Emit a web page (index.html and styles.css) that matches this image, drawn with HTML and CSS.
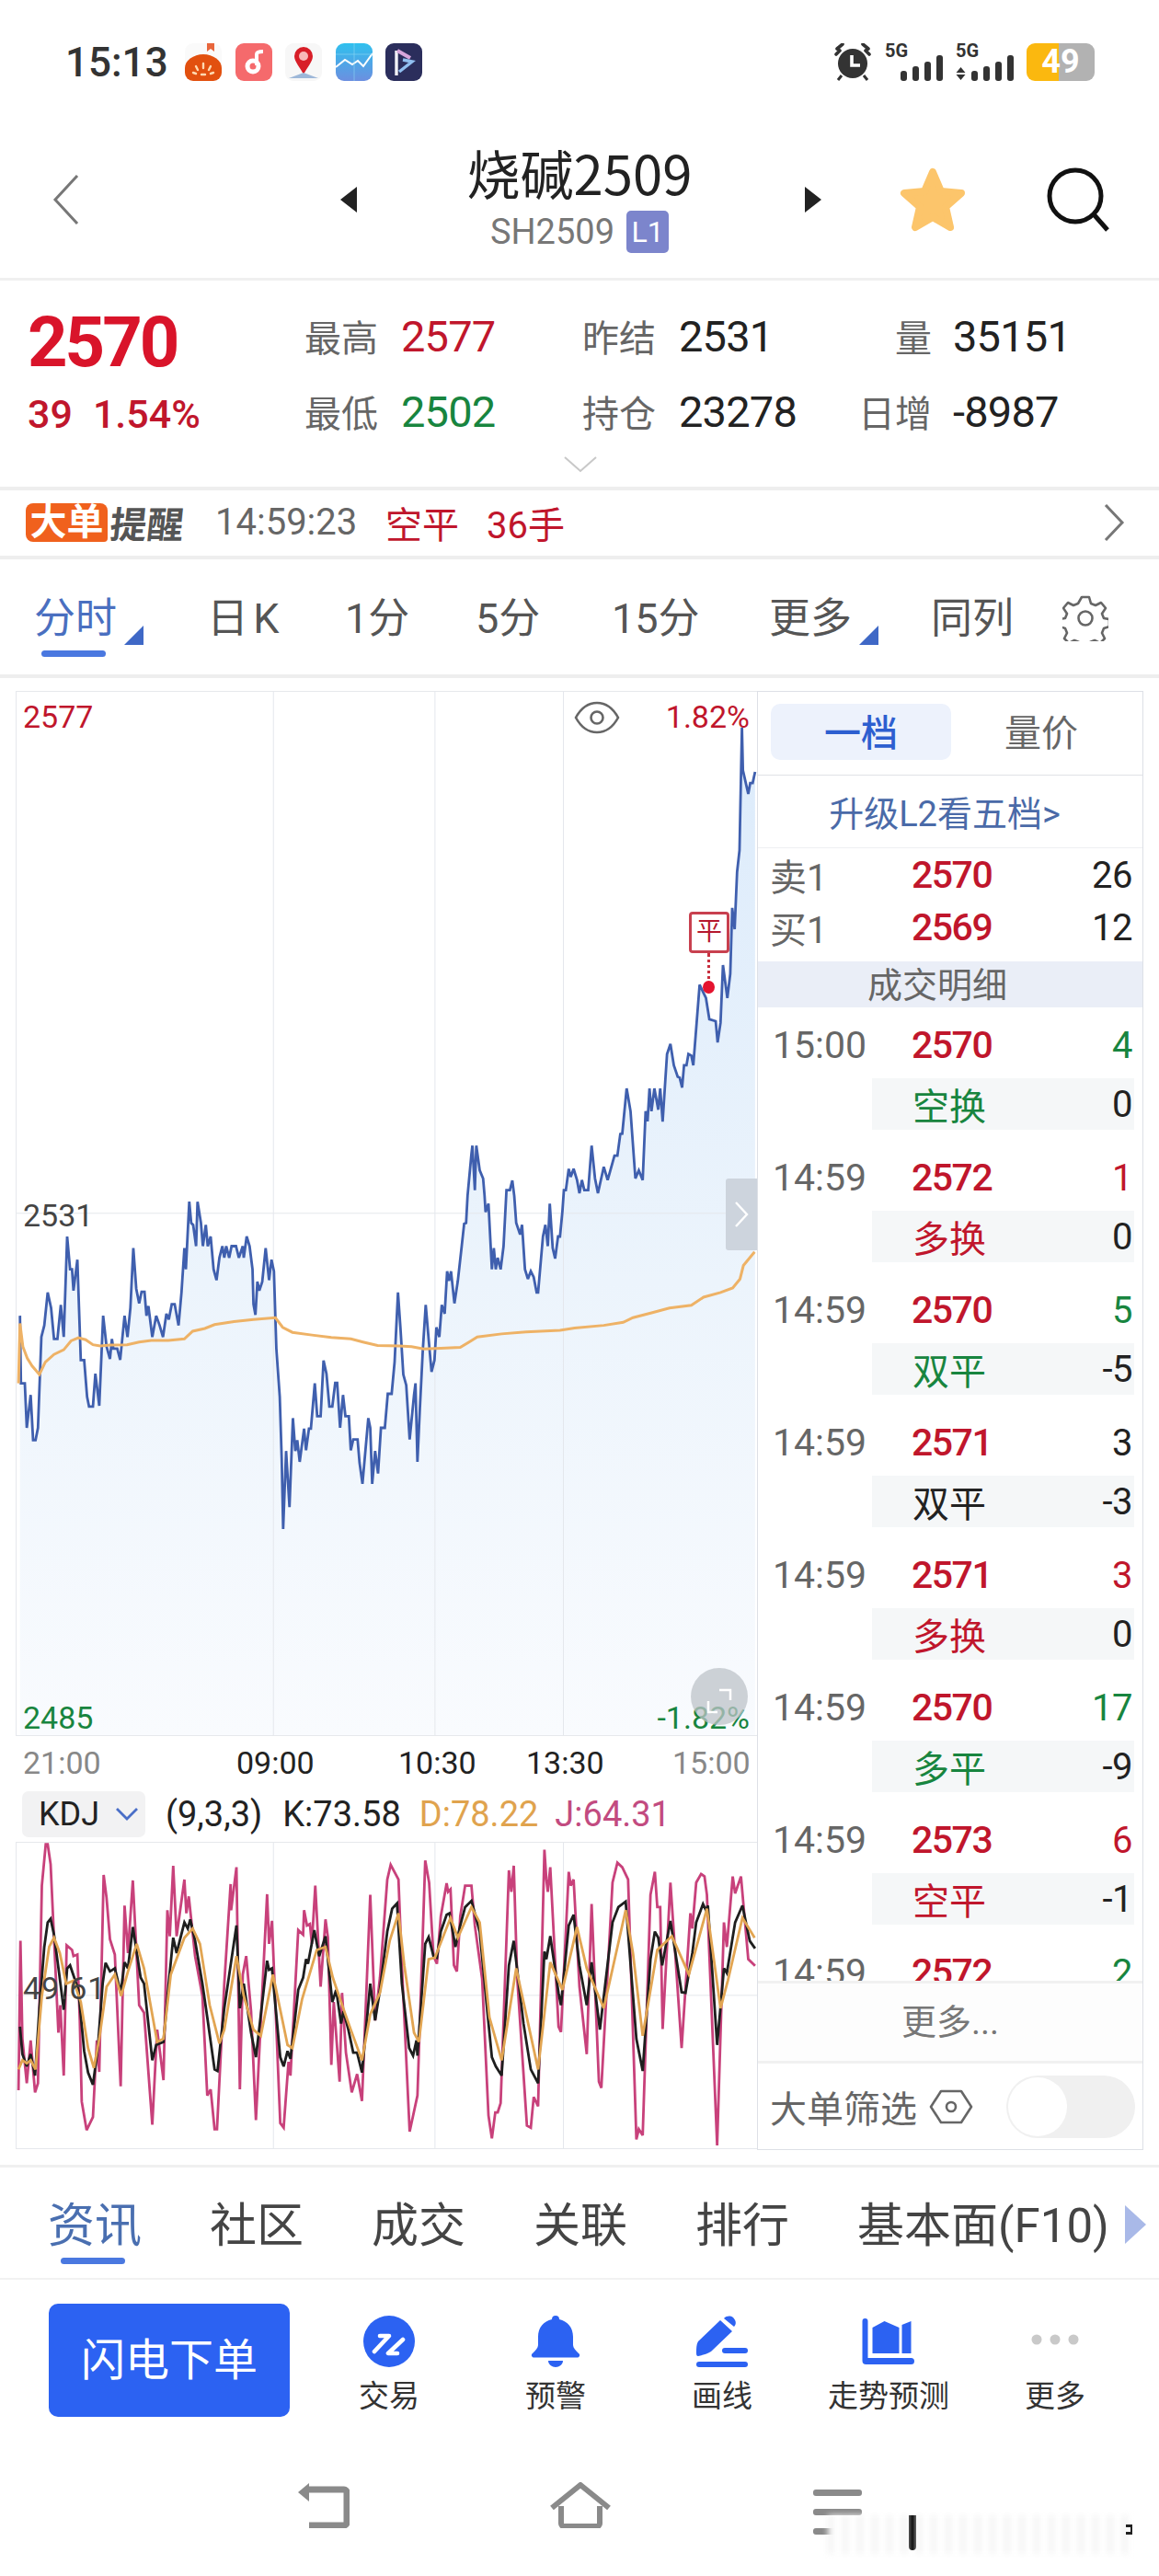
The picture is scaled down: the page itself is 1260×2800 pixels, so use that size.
FILE: index.html
```html
<!DOCTYPE html>
<html lang="zh">
<head>
    <meta charset="utf-8">
    <title>烧碱2509</title>
    <link rel="stylesheet" href="styles.css">
</head>
<body>
    <!-- status bar -->
    <div class="status">
        <span class="clock">15:13</span>
        <div class="app-icons">
            <svg class="app" viewBox="0 0 40 41"><rect width="40" height="41" rx="9" fill="#fafafa"/><path d="M24 0h8v9l-4-3-4 3z" fill="#e8663c"/><path d="M0 27a20 15 0 0 1 40 0v5a9 9 0 0 1-9 9H9a9 9 0 0 1-9-9z" fill="#e2500f"/><path d="M20 22v5M12 25l2 4M28 25l-2 4M9 32l3 1M31 32l-3 1M18 34h4" stroke="#ffd9b0" stroke-width="2.4" stroke-linecap="round"/></svg>
            <svg class="app" viewBox="0 0 40 41"><rect width="40" height="41" rx="9" fill="#f56a6c"/><circle cx="19" cy="25" r="6" fill="none" stroke="#fff" stroke-width="5"/><path d="M23 24V12c0-2 3-3 7-3" fill="none" stroke="#fff" stroke-width="4"/></svg>
            <svg class="app" viewBox="0 0 40 41"><rect width="40" height="41" rx="9" fill="#f7f7f7"/><path d="M20 4a10 10 0 0 1 10 10c0 6-6 12-10 20-4-8-10-14-10-20A10 10 0 0 1 20 4z" fill="#d81e28"/><path d="M4 38l16-6 16 6z" fill="#9db7d8"/><circle cx="20" cy="14" r="5" fill="#f8b8b8"/></svg>
            <svg class="app" viewBox="0 0 40 41"><defs><linearGradient id="stockBg" x1="0" y1="0" x2="0" y2="1"><stop offset="0" stop-color="#2fc0ee"/><stop offset="1" stop-color="#6c8fe0"/></linearGradient></defs><rect width="40" height="41" rx="9" fill="url(#stockBg)"/><path d="M0 26l10-8 8 5 6-4 6 6 10-14" fill="none" stroke="#fff" stroke-width="2"/><path d="M0 12h40M20 0v41" stroke="#8fd8f4" stroke-width=".6"/></svg>
            <svg class="app" viewBox="0 0 40 41"><rect width="40" height="41" rx="9" fill="#2b2e5c"/><path d="M12 8v27" stroke="#f3f3f8" stroke-width="3.4"/><path d="M13 8l14 8" stroke="#d8a6dc" stroke-width="4"/><path d="M15 31l14-11-10-2" fill="none" stroke="#90bff0" stroke-width="3.4"/></svg>
        </div>
        <div class="status-right">
            <svg class="alarm" viewBox="0 0 40 41"><circle cx="20" cy="22" r="16" fill="#333"/><path d="M6 8l-4 4 M34 8l4 4 M3 6l6-5 M37 6l-6-5" stroke="#333" stroke-width="3.6" stroke-linecap="round"/><path d="M8 35l-4 5 M32 35l4 5" stroke="#333" stroke-width="3"/><path d="M19 13v11h9" fill="none" stroke="#fff" stroke-width="3.6"/></svg>
            <div class="signal">
                <span class="net">5G</span>
                <span class="bars"><i class="b1"></i><i class="b2"></i><i class="b3"></i><i class="b4"></i></span>
            </div>
            <div class="signal second">
                <span class="net">5G</span>
                <svg class="updown" viewBox="0 0 11 14"><path d="M5.5 0L10.500 6H.5zM5.500 14L.5 8h10z" fill="#333"/></svg>
                <span class="bars"><i class="b1"></i><i class="b2"></i><i class="b3"></i><i class="b4"></i></span>
            </div>
            <div class="battery"><span>49</span></div>
        </div>
    </div>

    <!-- title bar -->
    <div class="nav">
        <svg class="back" viewBox="0 0 30 54"><path d="M27 1L3 27l24 26" fill="none" stroke="#777" stroke-width="3"/></svg>
        <svg class="tri tri-l" viewBox="0 0 18 28"><path d="M18 0v28L0 14z" fill="#222"/></svg>
        <div class="nav-title">
            <div class="name">烧碱2509</div>
            <div class="code">SH2509<span class="lv">L1</span></div>
        </div>
        <svg class="tri tri-r" viewBox="0 0 18 28"><path d="M0 0v28l18-14z" fill="#222"/></svg>
        <svg class="star" viewBox="0 0 72 72"><path d="M36 6l9 21 22 2-17 15 5 22-19-11-19 11 5-22L5 29l22-2z" fill="#fcc56b" stroke="#fcc56b" stroke-width="8" stroke-linejoin="round"/></svg>
        <svg class="search" viewBox="0 0 72 72"><circle cx="32" cy="32" r="28" fill="none" stroke="#111" stroke-width="5"/><path d="M52 52l15 17" stroke="#111" stroke-width="5"/></svg>
    </div>

    <!-- quote -->
    <div class="quote">
        <div class="price-box">
            <div class="last">2570</div>
            <div class="change"><span>39</span><span>1.54%</span></div>
        </div>
        <div class="stats">
            <div class="stat"><span class="lbl">最高</span><span class="val up">2577</span></div>
            <div class="stat"><span class="lbl">昨结</span><span class="val">2531</span></div>
            <div class="stat"><span class="lbl">量</span><span class="val">35151</span></div>
            <div class="stat"><span class="lbl">最低</span><span class="val down">2502</span></div>
            <div class="stat"><span class="lbl">持仓</span><span class="val">23278</span></div>
            <div class="stat"><span class="lbl">日增</span><span class="val">-8987</span></div>
        </div>
        <svg class="expand" viewBox="0 0 36 18"><path d="M1 1l17 15L35 1" fill="none" stroke="#c8c8c8" stroke-width="2"/></svg>
    </div>

    <!-- big order alert -->
    <div class="alert">
        <span class="alert-tag">大单</span><span class="alert-word">提醒</span>
        <span class="alert-time">14:59:23</span>
        <span class="alert-type">空平</span>
        <span class="alert-num">36手</span>
        <svg class="alert-more" viewBox="0 0 24 40"><path d="M3 1l18 19L3 39" fill="none" stroke="#777" stroke-width="3"/></svg>
    </div>

    <!-- period tabs -->
    <div class="periods">
        <span class="period on">分时<i class="corner"></i></span>
        <span class="period p-day">日 K</span>
        <span class="period p-1">1分</span>
        <span class="period p-5">5分</span>
        <span class="period p-15">15分</span>
        <span class="period p-more">更多<i class="corner"></i></span>
        <span class="period p-same">同列</span>
        <svg class="gear" viewBox="0 0 50 50"><path d="M21 2h8l2 7 5 2 6-3 5 6-4 6 2 5 6 1v8l-6 2-2 5 3 6-5 5-6-3-5 2-2 6h-8l-2-6-5-2-6 3-5-5 3-6-2-5-6-2v-8l6-1 2-5-4-6 5-6 6 3 5-2z" fill="none" stroke="#666" stroke-width="2.600" stroke-linejoin="round"/><circle cx="25" cy="25" r="7.500" fill="none" stroke="#666" stroke-width="2.600"/></svg>
    </div>

    <!-- charts and trades -->
    <div class="board">
        <div class="charts">
            <div class="main-chart">
                <svg class="plot" viewBox="33 -1304 1522 2699" preserveAspectRatio="none">
                    <defs>
                        <linearGradient id="areaFill" x1="0" y1="0" x2="0" y2="1">
                            <stop offset="0" stop-color="#dcebfb"/>
                            <stop offset=".55" stop-color="#ecf4fc"/>
                            <stop offset="1" stop-color="#f9fbfe"/>
                        </linearGradient>
                    </defs>
                    <polygon fill="url(#areaFill)" points="40,1395 40,310 42,485 50,485 54,600 62,515 67,632 72,632 77,600 84,365 90,335 97,250 104,290 110,370 117,370 124,282 130,365 137,105 143,190 147,190 150,245 158,165 165,425 172,425 178,520 182,545 190,545 195,460 203,543 211,310 218,390 225,422 229,370 232,395 240,395 246,424 255,310 261,365 267,290 273,135 279,240 285,278 290,248 296,248 300,310 304,285 312,365 320,310 327,335 334,365 341,305 346,320 352,280 358,280 366,335 372,250 378,135 381,190 388,15 392,70 396,75 402,130 405,15 412,70 416,130 422,75 426,130 432,105 438,190 444,218 450,160 456,130 460,160 464,130 470,160 475,130 484,130 490,160 498,130 500,160 506,105 512,130 518,190 520,280 524,308 528,222 532,245 538,222 545,135 552,218 557,165 562,195 567,395 574,520 578,680 581,862 587,660 594,805 601,575 606,660 610,632 615,688 624,602 628,658 634,602 638,602 646,485 651,570 658,570 664,426 670,460 676,545 682,545 688,484 692,484 698,600 704,515 709,570 716,570 720,658 725,630 734,630 738,690 744,745 750,660 756,575 760,600 764,745 770,660 776,718 782,600 790,600 796,512 804,512 810,430 817,250 822,340 828,462 834,490 841,630 850,515 853,485 857,688 862,550 868,400 874,282 880,370 886,455 892,425 896,340 902,365 907,282 913,305 918,195 922,220 926,195 933,278 940,220 948,130 953,72 957,70 960,0 968,-109 970,-130 975,-15 978,-130 985,-66 992,-45 995,0 997,42 1003,20 1010,190 1014,135 1018,190 1022,160 1028,190 1034,130 1040,-15 1047,-15 1052,-40 1056,0 1060,70 1068,100 1072,75 1078,190 1084,215 1090,195 1096,210 1102,250 1105,250 1115,105 1120,75 1125,130 1129,20 1135,135 1140,162 1146,105 1150,105 1155,40 1158,-15 1162,-15 1168,-70 1172,-49 1178,-70 1185,-41 1190,-7 1195,-41 1200,-15 1208,-15 1215,-130 1222,-45 1228,-7 1240,-75 1248,-41 1262,-104 1268,-104 1274,-160 1278,-161 1287,-278 1295,-219 1305,-45 1312,-66 1320,-41 1326,-219 1330,-193 1334,-278 1338,-219 1344,-278 1352,-223 1356,-278 1361,-192 1370,-367 1377,-393 1384,-338 1392,-308 1396,-306 1401,-280 1405,-338 1410,-338 1414,-367 1420,-363 1424,-338 1437,-546 1450,-512 1457,-457 1470,-452 1474,-397 1480,-448 1485,-597 1494,-512 1500,-575 1504,-745 1509,-690 1514,-838 1519,-894 1524,-1212 1526,-1101 1537,-1040 1541,-1068 1546,-1068 1551,-1097 1551,1395"/>
                    <g class="grid">
                        <line x1="561" y1="-1304" x2="561" y2="1395"/>
                        <line x1="893" y1="-1304" x2="893" y2="1395"/>
                        <line x1="1157" y1="-1304" x2="1157" y2="1395"/>
                        <line x1="33" y1="45" x2="1555" y2="45"/>
                    </g>
                    <polyline class="price-line" points="40,310 42,485 50,485 54,600 62,515 67,632 72,632 77,600 84,365 90,335 97,250 104,290 110,370 117,370 124,282 130,365 137,105 143,190 147,190 150,245 158,165 165,425 172,425 178,520 182,545 190,545 195,460 203,543 211,310 218,390 225,422 229,370 232,395 240,395 246,424 255,310 261,365 267,290 273,135 279,240 285,278 290,248 296,248 300,310 304,285 312,365 320,310 327,335 334,365 341,305 346,320 352,280 358,280 366,335 372,250 378,135 381,190 388,15 392,70 396,75 402,130 405,15 412,70 416,130 422,75 426,130 432,105 438,190 444,218 450,160 456,130 460,160 464,130 470,160 475,130 484,130 490,160 498,130 500,160 506,105 512,130 518,190 520,280 524,308 528,222 532,245 538,222 545,135 552,218 557,165 562,195 567,395 574,520 578,680 581,862 587,660 594,805 601,575 606,660 610,632 615,688 624,602 628,658 634,602 638,602 646,485 651,570 658,570 664,426 670,460 676,545 682,545 688,484 692,484 698,600 704,515 709,570 716,570 720,658 725,630 734,630 738,690 744,745 750,660 756,575 760,600 764,745 770,660 776,718 782,600 790,600 796,512 804,512 810,430 817,250 822,340 828,462 834,490 841,630 850,515 853,485 857,688 862,550 868,400 874,282 880,370 886,455 892,425 896,340 902,365 907,282 913,305 918,195 922,220 926,195 933,278 940,220 948,130 953,72 957,70 960,0 968,-109 970,-130 975,-15 978,-130 985,-66 992,-45 995,0 997,42 1003,20 1010,190 1014,135 1018,190 1022,160 1028,190 1034,130 1040,-15 1047,-15 1052,-40 1056,0 1060,70 1068,100 1072,75 1078,190 1084,215 1090,195 1096,210 1102,250 1105,250 1115,105 1120,75 1125,130 1129,20 1135,135 1140,162 1146,105 1150,105 1155,40 1158,-15 1162,-15 1168,-70 1172,-49 1178,-70 1185,-41 1190,-7 1195,-41 1200,-15 1208,-15 1215,-130 1222,-45 1228,-7 1240,-75 1248,-41 1262,-104 1268,-104 1274,-160 1278,-161 1287,-278 1295,-219 1305,-45 1312,-66 1320,-41 1326,-219 1330,-193 1334,-278 1338,-219 1344,-278 1352,-223 1356,-278 1361,-192 1370,-367 1377,-393 1384,-338 1392,-308 1396,-306 1401,-280 1405,-338 1410,-338 1414,-367 1420,-363 1424,-338 1437,-546 1450,-512 1457,-457 1470,-452 1474,-397 1480,-448 1485,-597 1494,-512 1500,-575 1504,-745 1509,-690 1514,-838 1519,-894 1524,-1212 1526,-1101 1537,-1040 1541,-1068 1546,-1068 1551,-1097"/>
                    <polyline class="avg-line" points="37,485 40,330 46,390 55,420 65,440 80,462 92,430 110,410 130,398 145,375 160,367 175,372 190,385 205,388 225,386 260,385 285,378 310,374 345,374 378,370 395,350 420,343 440,333 480,325 520,320 565,315 580,340 600,353 640,360 680,366 720,370 745,378 775,387 820,388 845,390 870,396 905,394 945,392 980,365 1030,357 1080,352 1150,348 1180,342 1240,335 1280,327 1300,315 1340,302 1375,290 1420,283 1445,262 1480,250 1505,238 1520,215 1527,180 1550,145"/>
                </svg>
                <span class="tag tag-high up">2577</span>
                <span class="tag tag-high-pct up">1.82%</span>
                <span class="tag tag-mid">2531</span>
                <span class="tag tag-low down">2485</span>
                <span class="tag tag-low-pct down">-1.82%</span>
                <svg class="eye" viewBox="0 0 50 36"><path d="M2 18C8 7 16 2 25 2s17 5 23 16c-6 11-14 16-23 16S8 29 2 18z" fill="none" stroke="#666" stroke-width="2.600"/><circle cx="25" cy="18" r="6.500" fill="none" stroke="#666" stroke-width="2.600"/></svg>
                <div class="deal-mark">平</div>
                <div class="deal-stem"></div>
                <div class="deal-dot"></div>
                <div class="collapse"><svg viewBox="0 0 16 30"><path d="M2 2l12 13L2 28" fill="none" stroke="#fff" stroke-width="2.400"/></svg></div>
                <div class="fullscreen"><svg viewBox="0 0 62 62"><path d="M31 24h12v11M19 36v12h10" fill="none" stroke="#fff" stroke-width="2.500"/></svg></div>
            </div>
            <div class="axis">
                <span class="muted">21:00</span>
                <span>09:00</span>
                <span>10:30</span>
                <span>13:30</span>
                <span class="muted">15:00</span>
            </div>
            <div class="kdj-head">
                <div class="kdj-btn">KDJ<svg viewBox="0 0 24 14"><path d="M1 1l11 11L23 1" fill="none" stroke="#4a6fc8" stroke-width="2.800"/></svg></div>
                <span class="kdj-param">(9,3,3)</span>
                <span class="kdj-param">K:73.58</span>
                <span class="kdj-d">D:78.22</span>
                <span class="kdj-j">J:64.31</span>
            </div>
            <div class="kdj-chart">
                <svg class="plot" viewBox="33 160 1522 997" preserveAspectRatio="none">
                    <g class="grid">
                        <line x1="561" y1="160" x2="561" y2="1157"/>
                        <line x1="893" y1="160" x2="893" y2="1157"/>
                        <line x1="1157" y1="160" x2="1157" y2="1157"/>
                        <line x1="33" y1="658" x2="1555" y2="658"/>
                    </g>
                    <polyline class="j-line" points="37,968 41,480 45,800 54,945 62,805 71,975 77,945 85,300 93,165 97,165 103,230 110,470 119,780 123,690 130,920 136,495 147,510 150,530 158,525 163,740 167,1005 177,1098 190,1055 198,805 203,908 212,265 218,340 225,475 235,525 247,955 255,365 262,520 272,283 285,690 295,715 312,1080 322,770 335,935 343,380 348,465 355,235 362,465 378,280 382,390 387,335 400,530 415,660 425,985 432,965 440,1095 445,1095 460,620 473,295 474,380 485,240 492,965 498,590 505,530 515,710 525,1065 548,328 552,490 558,415 575,1075 582,1090 592,875 596,920 612,445 622,460 624,380 630,430 636,425 640,490 647,300 658,630 668,410 673,470 680,885 685,680 697,940 702,650 710,845 722,975 733,915 743,1003 760,330 770,740 780,600 795,280 802,232 818,280 825,560 841,1103 857,985 873,218 881,290 890,530 897,555 905,400 917,292 920,320 925,312 932,560 938,580 945,400 955,300 968,300 975,430 990,605 1003,1050 1010,1125 1017,1040 1022,1040 1028,1010 1045,250 1050,320 1055,235 1062,600 1082,1083 1090,1090 1096,990 1105,1020 1118,183 1122,280 1125,320 1130,240 1147,760 1152,778 1168,255 1172,300 1178,280 1190,630 1205,850 1215,360 1230,940 1235,960 1258,290 1268,225 1278,240 1290,280 1307,1128 1312,1095 1320,1115 1336,330 1345,255 1350,370 1356,370 1361,768 1377,290 1400,830 1418,390 1422,440 1430,290 1440,262 1447,270 1452,330 1473,1148 1487,420 1493,500 1505,270 1510,325 1522,270 1537,540 1551,562"/>
                    <polyline class="k-line" points="40,760 45,850 54,890 62,850 71,920 80,700 90,500 97,420 103,408 110,460 120,580 130,705 137,570 143,560 160,640 172,840 180,910 190,950 200,830 210,620 216,552 225,580 235,570 247,650 255,550 262,570 272,435 288,600 295,620 312,870 320,820 335,810 345,630 355,470 362,520 378,420 385,440 390,410 400,480 415,620 425,730 440,900 446,905 460,700 485,430 492,700 500,620 515,780 525,860 548,545 552,575 558,570 575,860 582,890 590,840 596,865 612,640 622,600 628,540 632,555 645,445 655,530 668,465 682,680 690,640 700,750 705,710 715,770 725,845 733,845 743,910 760,620 770,740 780,640 795,450 805,375 815,358 825,620 840,830 848,855 855,805 857,855 873,490 880,468 890,530 897,535 905,450 917,395 923,390 935,500 945,430 955,370 968,350 985,450 1000,700 1010,860 1018,890 1030,920 1045,560 1055,480 1075,750 1090,900 1105,945 1118,515 1122,540 1130,465 1147,650 1152,690 1168,430 1178,395 1190,560 1205,690 1215,550 1232,770 1258,420 1270,370 1285,352 1307,800 1320,905 1336,540 1345,450 1352,470 1360,560 1377,415 1400,648 1408,650 1422,520 1430,420 1444,360 1450,380 1454,365 1473,820 1487,570 1493,585 1510,420 1525,365 1540,480 1551,505"/>
                    <polyline class="d-line" points="37,900 45,870 54,880 62,870 72,900 85,660 100,500 110,470 122,520 135,620 150,610 165,680 180,830 192,895 203,800 218,630 235,590 248,660 262,580 280,490 295,570 322,810 335,800 350,590 378,470 395,440 410,490 430,690 450,815 460,770 485,530 500,660 520,770 535,790 560,590 590,820 600,830 620,670 650,510 668,500 683,600 700,680 720,770 743,870 760,720 780,650 800,480 818,390 830,560 850,780 860,810 880,540 893,535 925,405 940,470 968,370 985,420 1005,730 1030,870 1060,570 1075,680 1105,900 1130,550 1155,640 1185,435 1205,570 1240,700 1285,380 1300,520 1320,790 1350,510 1380,465 1415,590 1452,375 1480,700 1495,610 1525,405 1550,470"/>
                </svg>
                <span class="tag tag-kdj">49.61</span>
            </div>
        </div>

        <div class="panel">
            <div class="panel-tabs">
                <span class="ptab on">一档</span>
                <span class="ptab">量价</span>
            </div>
            <div class="upgrade">升级L2看五档&gt;</div>
            <div class="book">
                <div class="book-row"><span class="lbl">卖1</span><span class="num up">2570</span><span class="qty">26</span></div>
                <div class="book-row"><span class="lbl">买1</span><span class="num up">2569</span><span class="qty">12</span></div>
            </div>
            <div class="detail-head">成交明细</div>
            <div class="trades">
                <div class="trade">
                    <div class="trade-top"><span class="time">15:00</span><span class="num up">2570</span><span class="qty down">4</span></div>
                    <div class="trade-sub"><span class="kind down">空换</span><span class="qty">0</span></div>
                </div>
                <div class="trade">
                    <div class="trade-top"><span class="time">14:59</span><span class="num up">2572</span><span class="qty up">1</span></div>
                    <div class="trade-sub"><span class="kind up">多换</span><span class="qty">0</span></div>
                </div>
                <div class="trade">
                    <div class="trade-top"><span class="time">14:59</span><span class="num up">2570</span><span class="qty down">5</span></div>
                    <div class="trade-sub"><span class="kind down">双平</span><span class="qty">-5</span></div>
                </div>
                <div class="trade">
                    <div class="trade-top"><span class="time">14:59</span><span class="num up">2571</span><span class="qty">3</span></div>
                    <div class="trade-sub"><span class="kind">双平</span><span class="qty">-3</span></div>
                </div>
                <div class="trade">
                    <div class="trade-top"><span class="time">14:59</span><span class="num up">2571</span><span class="qty up">3</span></div>
                    <div class="trade-sub"><span class="kind up">多换</span><span class="qty">0</span></div>
                </div>
                <div class="trade">
                    <div class="trade-top"><span class="time">14:59</span><span class="num up">2570</span><span class="qty down">17</span></div>
                    <div class="trade-sub"><span class="kind down">多平</span><span class="qty">-9</span></div>
                </div>
                <div class="trade">
                    <div class="trade-top"><span class="time">14:59</span><span class="num up">2573</span><span class="qty up">6</span></div>
                    <div class="trade-sub"><span class="kind up">空平</span><span class="qty">-1</span></div>
                </div>
                <div class="trade">
                    <div class="trade-top"><span class="time">14:59</span><span class="num up">2572</span><span class="qty down">2</span></div>
                </div>
            </div>
            <div class="more-row">更多...</div>
            <div class="filter-row">
                <span>大单筛选</span>
                <svg class="hex" viewBox="0 0 48 38"><path d="M13 2h22l11 17-11 17H13L2 19z" fill="none" stroke="#666" stroke-width="2.600" stroke-linejoin="round"/><circle cx="24" cy="19" r="5" fill="none" stroke="#666" stroke-width="2.600"/></svg>
                <span class="toggle"><i></i></span>
            </div>
        </div>
    </div>

    <!-- info tabs -->
    <div class="info-tabs">
        <span class="info on">资讯</span>
        <span class="info">社区</span>
        <span class="info">成交</span>
        <span class="info">关联</span>
        <span class="info">排行</span>
        <span class="info">基本面(F10)</span>
        <svg class="info-arrow" viewBox="0 0 23 42"><path d="M0 0l23 21L0 42z" fill="#a9b9e8"/></svg>
    </div>

    <!-- action bar -->
    <div class="actions">
        <div class="flash">闪电下单</div>
        <div class="action">
            <svg viewBox="0 0 56 56"><circle cx="28" cy="28" r="28" fill="#2c62f2"/><path d="M18 22h10L12 39M43 26L27 41h10" fill="none" stroke="#fff" stroke-width="4.600" stroke-linecap="round" stroke-linejoin="round"/></svg>
            <span>交易</span>
        </div>
        <div class="action">
            <svg viewBox="0 0 52 56"><path d="M26 0a4 4 0 0 1 4 4c9 2 15 9 15 19v9c0 3 3 6 6 9a2.500 2.500 0 0 1-2 4.500H3a2.500 2.500 0 0 1-2-4.500c3-3 6-6 6-9v-9c0-10 6-17 15-19a4 4 0 0 1 4-4z" fill="#2c62f2"/><path d="M18 49h16c0 4-4 7-8 7s-8-3-8-7z" fill="#2c62f2"/></svg>
            <span>预警</span>
        </div>
        <div class="action">
            <svg viewBox="0 0 56 56"><path d="M2 28L26 5l13 12-23 22c-5 3-10 4-14 5-2 0-2-2-2-4 0-4 0-9 2-12z" fill="#2c62f2"/><path d="M30 3c3-3 7-3 10-1 3 3 4 7 1 10z" fill="#2c62f2"/><rect x="28" y="35" width="28" height="6" rx="3" fill="#2c62f2"/><rect y="50" width="56" height="6" rx="3" fill="#2c62f2"/></svg>
            <span>画线</span>
        </div>
        <div class="action">
            <svg viewBox="0 -3 57 56"><path d="M0 3a3 3 0 0 1 6 0v40h47a3 3 0 0 1 0 7H4a4 4 0 0 1-4-4z" fill="#2c62f2"/><path d="M11 10l13-7 16 7v28H11zM43 7l10-4v35H43z" fill="#2c62f2"/></svg>
            <span>走势预测</span>
        </div>
        <div class="action">
            <svg viewBox="0 0 60 56"><circle cx="10" cy="26" r="5.500" fill="#c9c9c9"/><circle cx="30" cy="26" r="5.500" fill="#c9c9c9"/><circle cx="50" cy="26" r="5.500" fill="#c9c9c9"/></svg>
            <span>更多</span>
        </div>
    </div>

    <!-- android nav -->
    <div class="sys-nav">
        <svg class="sys-back" viewBox="0 0 58 50"><path d="M14 8h38a3 3 0 0 1 3 3v33a3 3 0 0 1-3 3H14" fill="none" stroke="#8a8a8a" stroke-width="7" stroke-linejoin="round"/><path d="M2 11L14 1v20z" fill="#8a8a8a"/></svg>
        <svg class="sys-home" viewBox="0 0 68 50"><path d="M3 28L34 3l31 25" fill="none" stroke="#8a8a8a" stroke-width="6" stroke-linejoin="round"/><path d="M13 26v19a3 3 0 0 0 3 3h36a3 3 0 0 0 3-3V26" fill="none" stroke="#8a8a8a" stroke-width="6"/></svg>
        <div class="sys-menu"><i></i><i></i><i></i></div>
        <div class="smudge"></div>
        <div class="smudge-bar"></div>
        <div class="smudge-tick"></div>
    </div>
</body>
</html>
```

FILE: styles.css
```css
* {
    box-sizing: border-box;
}

body {
    margin: 0;
    width: 1260px;
    height: 2800px;
    overflow: hidden;
    background-color: #fff;
    color: #222;
    font-family: Roboto, "Noto Sans CJK SC", sans-serif;
}

.up { color: #c0162c; }
.down { color: #18853f; }

/* status bar */
.status {
    height: 108px;
    display: flex;
    align-items: flex-start;
    padding: 47px 0 0 71px;
}

.clock {
    width: 130px;
    font-size: 44px;
    line-height: 42px;
    font-weight: 500;
    color: #333;
}

.app-icons {
    display: flex;
    gap: 14.500px;
}

.app {
    width: 40px;
    height: 41px;
}

.status-right {
    margin-left: auto;
    margin-right: 70px;
    display: flex;
    align-items: flex-start;
    height: 41px;
}

.alarm {
    width: 40px;
    height: 41px;
    margin-right: 15px;
}

.signal {
    position: relative;
    width: 64px;
    height: 41px;
    margin-right: 13px;
}

.signal.second {
    width: 64px;
}

.net {
    position: absolute;
    left: 0;
    top: -2px;
    font-size: 20px;
    line-height: 20px;
    font-weight: 700;
    color: #333;
}

.bars {
    position: absolute;
    left: 17px;
    bottom: 0;
    display: flex;
    align-items: flex-end;
    gap: 6px;
}

.bars i {
    width: 7px;
    border-radius: 3px;
    background-color: #333;
}

.bars .b1 { height: 11px; }
.bars .b2 { height: 16px; }
.bars .b3 { height: 21px; }
.bars .b4 { height: 28px; }

.updown {
    position: absolute;
    left: 0;
    bottom: 1px;
    width: 11px;
    height: 14px;
}

.battery {
    width: 74px;
    height: 41px;
    border-radius: 9px;
    background: linear-gradient(90deg, #fbb80f 47%, #b2b2b2 47%);
    color: #fff;
    font-size: 36px;
    line-height: 41px;
    font-weight: 700;
    text-align: center;
}

/* title bar */
.nav {
    position: relative;
    height: 197px;
    border-bottom: 3px solid #f0f0f0;
}

.back {
    position: absolute;
    left: 57px;
    top: 82px;
    width: 30px;
    height: 54px;
}

.tri {
    position: absolute;
    top: 95px;
    width: 18px;
    height: 28px;
}

.tri-l { left: 370px; }
.tri-r { left: 875px; }

.nav-title {
    padding-top: 47px;
    text-align: center;
}

.name {
    font-size: 58px;
    line-height: 64px;
    font-family: "Noto Sans CJK SC", sans-serif;
    font-weight: 400;
    color: #222;
}

.code {
    display: flex;
    justify-content: center;
    align-items: center;
    gap: 13px;
    margin-top: 10px;
    font-size: 38px;
    line-height: 46px;
    color: #777;
}

.lv {
    width: 46px;
    height: 46px;
    border-radius: 5px;
    background-color: #7c85cc;
    color: #fff;
    font-size: 32px;
    text-align: center;
}

.star {
    position: absolute;
    left: 978px;
    top: 73px;
    width: 72px;
    height: 72px;
}

.search {
    position: absolute;
    left: 1137px;
    top: 73px;
    width: 72px;
    height: 72px;
}

/* quote */
.quote {
    position: relative;
    height: 228px;
    border-bottom: 4px solid #eee;
    display: flex;
}

.price-box {
    width: 331px;
    padding: 31px 0 0 30px;
}

.last {
    font-size: 76px;
    line-height: 72px;
    font-weight: 700;
    color: #d9142a;
    letter-spacing: -3px;
}

.change {
    display: flex;
    gap: 22px;
    margin-top: 17px;
    font-size: 43px;
    line-height: 50px;
    font-weight: 500;
    color: #c0162c;
}

.stats {
    flex: 1;
    display: grid;
    grid-template-columns: 302px 285px 1fr;
    grid-auto-rows: 82px;
    padding-top: 19px;
}

.stat {
    display: flex;
    align-items: center;
    height: 82px;
}

.stat:nth-child(3n) {
    margin-left: 14px;
}

.stat .lbl {
    width: 105px;
    color: #666;
    font-size: 40px;
    font-family: "Noto Sans CJK SC", sans-serif;
}

.stat .val {
    font-size: 47px;
    letter-spacing: -0.8px;
    font-weight: 400;
}

.stat:nth-child(3n) .lbl {
    width: 104px;
    padding-right: 23px;
    text-align: right;
    white-space: nowrap;
}

.expand {
    position: absolute;
    left: 613px;
    top: 191px;
    width: 36px;
    height: 18px;
}

/* big order alert */
.alert {
    height: 75px;
    border-bottom: 4px solid #eee;
    display: flex;
    align-items: center;
    padding-left: 28px;
    padding-bottom: 2px;
    font-size: 40px;
}

.alert-tag {
    width: 89px;
    height: 42px;
    border-radius: 8px 8px 4px 8px;
    background-color: #f0611d;
    color: #fff;
    font-size: 40px;
    line-height: 42px;
    font-weight: 700;
    text-align: center;
}

.alert-word {
    display: inline-block;
    width: 83px;
    margin-left: 3px;
    color: #555;
    font-size: 40px;
    font-weight: 700;
    transform: skewX(-6deg);
}

.alert-time {
    width: 185px;
    margin-left: 31px;
    color: #666;
}

.alert-type {
    width: 110px;
    color: #c0162c;
}

.alert-num {
    color: #c0162c;
}

.alert-more {
    margin-left: auto;
    margin-right: 37px;
    width: 24px;
    height: 40px;
}

/* period tabs */
.periods {
    position: relative;
    height: 129px;
    border-bottom: 4px solid #eee;
    display: grid;
    grid-template-columns: 191px 147px 142px 148px 171px 176px 1fr;
    align-items: center;
    padding-left: 37px;
    padding-bottom: 4px;
    font-size: 45px;
    color: #555;
}

.period {
    position: relative;
    width: max-content;
}

.p-day {
    margin-left: -3px;
    word-spacing: -6px;
}

.period.on {
    color: #4a6fc0;
}

.period.on::after {
    content: "";
    position: absolute;
    left: 8px;
    bottom: -13px;
    width: 70px;
    height: 7px;
    border-radius: 4px;
    background-color: #4a78e0;
}

.corner {
    position: absolute;
    right: -29px;
    bottom: 0;
    width: 0;
    height: 0;
    border-left: 21px solid transparent;
    border-bottom: 21px solid #3f68c6;
}

.gear {
    position: absolute;
    left: 1155px;
    top: 39px;
    width: 50px;
    height: 50px;
}

/* chart + trade board */
.board {
    display: flex;
    margin: 14px 17px 0;
    height: 1586px;
}

.charts {
    width: 806px;
}

.main-chart {
    position: relative;
    height: 1136px;
    border-top: 1px solid #e6e8ec;
    border-left: 1px solid #e6e8ec;
    border-bottom: 1px solid #e6e8ec;
}

.plot {
    display: block;
    width: 100%;
    height: 100%;
}

.plot polyline {
    fill: none;
    vector-effect: non-scaling-stroke;
    stroke-linejoin: miter;
    stroke-miterlimit: 3;
}

.grid line {
    stroke: #e4e7ec;
    stroke-width: 1;
    vector-effect: non-scaling-stroke;
}

.price-line {
    stroke: #3f5fae;
    stroke-width: 2.800;
}

.avg-line {
    stroke: #eeb266;
    stroke-width: 3;
}

.j-line {
    stroke: #c8417b;
    stroke-width: 2.800;
}

.k-line {
    stroke: #1e1e1e;
    stroke-width: 2.800;
}

.d-line {
    stroke: #e2a552;
    stroke-width: 2.800;
}

.tag {
    position: absolute;
    font-size: 34px;
    line-height: 36px;
}

.tag-high { left: 7px; top: 9px; }
.tag-high-pct { right: 8px; top: 9px; }
.tag-mid { left: 7px; top: 551px; color: #444; }
.tag-low { left: 7px; top: 1097px; }
.tag-low-pct { right: 8px; top: 1097px; }
.tag-kdj { left: 7px; top: 140px; color: #444; letter-spacing: 1px; }

.eye {
    position: absolute;
    left: 606px;
    top: 10px;
    width: 50px;
    height: 36px;
}

.deal-mark {
    position: absolute;
    left: 731px;
    top: 239px;
    width: 44px;
    height: 45px;
    border: 3px solid #c8404f;
    border-radius: 4px;
    background-color: #fff;
    color: #b5182e;
    font-size: 28px;
    line-height: 38px;
    text-align: center;
}

.deal-stem {
    position: absolute;
    left: 751px;
    top: 284px;
    height: 36px;
    border-left: 3px dotted #c8303f;
}

.deal-dot {
    position: absolute;
    left: 746px;
    top: 314px;
    width: 13px;
    height: 14px;
    border-radius: 50%;
    background-color: #e4132f;
}

.collapse {
    position: absolute;
    left: 771px;
    top: 529px;
    width: 34px;
    height: 78px;
    border-radius: 3px 0 0 3px;
    background-color: #cdd4dd;
    display: flex;
    align-items: center;
    justify-content: center;
}

.collapse svg {
    width: 16px;
    height: 30px;
}

.fullscreen {
    position: absolute;
    left: 733px;
    top: 1061px;
    width: 62px;
    height: 62px;
    border-radius: 50%;
    background-color: rgba(190, 195, 200, 0.75);
}

.fullscreen svg {
    display: block;
    width: 62px;
    height: 62px;
}

.axis {
    height: 58px;
    display: grid;
    grid-template-columns: 232px 176px 139px 159px auto;
    align-items: center;
    padding-left: 8px;
    font-size: 34px;
    color: #222;
}

.axis .muted {
    color: #888;
}

.kdj-head {
    height: 58px;
    display: flex;
    align-items: center;
    padding-left: 7px;
    padding-bottom: 4px;
    font-size: 38px;
    border-bottom: 1px solid #e6e8ec;
}

.kdj-btn {
    width: 134px;
    height: 50px;
    display: flex;
    align-items: center;
    gap: 18px;
    padding-left: 18px;
    border-radius: 7px;
    background-color: #f2f2f3;
    font-size: 36px;
}

.kdj-btn svg {
    width: 24px;
    height: 14px;
}

.kdj-param {
    margin-left: 22px;
    color: #222;
}

.kdj-d {
    margin-left: 20px;
    color: #e0a34e;
}

.kdj-j {
    margin-left: 18px;
    color: #c24b80;
}

.kdj-chart {
    position: relative;
    height: 333px;
    border-left: 1px solid #e6e8ec;
    border-bottom: 1px solid #e6e8ec;
}

/* right panel */
.panel {
    width: 420px;
    border: 1px solid #dde0e6;
    display: flex;
    flex-direction: column;
}

.panel-tabs {
    height: 91px;
    display: flex;
    align-items: flex-start;
    padding: 13px 0 0 14px;
    border-bottom: 1px solid #dfe2e6;
}

.ptab {
    width: 196px;
    height: 61px;
    border-radius: 10px;
    color: #666;
    font-size: 40px;
    line-height: 65px;
    text-align: center;
}

.ptab.on {
    background-color: #edf2fc;
    color: #2d5fd0;
    font-weight: 500;
}

.upgrade {
    height: 79px;
    border-bottom: 1px solid #eef0f2;
    color: #4a6aa8;
    font-size: 38px;
    line-height: 84px;
    text-align: center;
    padding-right: 12px;
}

.book {
    height: 123px;
}

.book-row {
    height: 57px;
    display: grid;
    grid-template-columns: 154px 1fr auto;
    align-items: center;
    padding: 0 11px 0 13px;
    font-size: 40px;
}

.book-row .lbl {
    color: #666;
}

.num {
    font-size: 41px;
    font-weight: 500;
    letter-spacing: -1.5px;
}

.qty {
    font-size: 40px;
    letter-spacing: -0.5px;
    text-align: right;
}

.detail-head {
    height: 50px;
    background-color: #eaeef7;
    color: #666;
    font-size: 38px;
    line-height: 52px;
    text-align: center;
    padding-right: 28px;
}

.trades {
    height: 1058px;
    padding-top: 5px;
    flex: none;
    overflow: hidden;
}

.trade {
    height: 144px;
}

.trade-top {
    height: 72px;
    display: grid;
    grid-template-columns: 151px 1fr auto;
    align-items: center;
    padding: 0 11px 0 16px;
}

.time {
    font-size: 41px;
    color: #666;
}

.trade-sub {
    height: 56px;
    margin: 0 9px 0 124px;
    padding: 0 2px 0 44px;
    display: flex;
    justify-content: space-between;
    align-items: center;
    background-color: #f5f7f8;
}

.kind {
    font-size: 40px;
}

.more-row {
    height: 90px;
    border-top: 3px solid #f1f1f1;
    border-bottom: 3px solid #f1f1f1;
    background-color: #fdfdfd;
    color: #777;
    font-size: 38px;
    line-height: 84px;
    text-align: center;
}

.filter-row {
    flex: 1;
    display: flex;
    align-items: center;
    padding-left: 13px;
    color: #666;
    font-size: 40px;
}

.hex {
    width: 48px;
    height: 38px;
    margin-left: 13px;
}

.toggle {
    width: 140px;
    height: 68px;
    margin-left: 36px;
    border-radius: 34px;
    background-color: #f0f0f0;
    display: flex;
    padding: 2px;
}

.toggle i {
    width: 64px;
    height: 64px;
    border-radius: 50%;
    background-color: #fff;
}

/* info tabs */
.info-tabs {
    position: relative;
    margin-top: 16px;
    height: 125px;
    border-top: 3px solid #f0f0f0;
    border-bottom: 2px solid #f2f2f2;
    display: flex;
    align-items: center;
    gap: 74px;
    padding: 8px 0 0 52px;
    font-size: 51px;
    line-height: 60px;
    color: #444;
}

.info {
    position: relative;
    white-space: nowrap;
}

.info.on {
    color: #4a6fb0;
}

.info.on::after {
    content: "";
    position: absolute;
    left: 14px;
    bottom: -11px;
    width: 70px;
    height: 7px;
    border-radius: 4px;
    background-color: #4a78e0;
}

.info-arrow {
    position: absolute;
    left: 1223px;
    top: 41px;
    width: 23px;
    height: 42px;
}

/* action bar */
.actions {
    display: flex;
    align-items: flex-start;
    padding: 26px 0 0 53px;
    height: 198px;
}

.flash {
    width: 262px;
    height: 123px;
    margin-right: 37px;
    border-radius: 10px;
    background-color: #2c62f2;
    color: #fff;
    font-size: 48px;
    line-height: 123px;
    text-align: center;
}

.action {
    flex: none;
    width: 142px;
    margin-left: 39px;
    margin-top: 13px;
    display: flex;
    flex-direction: column;
    align-items: center;
    color: #333;
    font-size: 33px;
    line-height: 46px;
    white-space: nowrap;
}

.flash + .action {
    margin-left: 0;
}

.action svg {
    width: 60px;
    height: 56px;
    margin-bottom: 9px;
}

/* system navigation */
.sys-nav {
    position: relative;
    display: flex;
    align-items: flex-start;
    height: 124px;
    padding: 22px 0 0 322px;
}

.sys-back {
    width: 58px;
    height: 50px;
}

.sys-home {
    width: 68px;
    height: 50px;
    margin-left: 217px;
}

.sys-menu {
    margin-left: 219px;
    margin-top: 8px;
    width: 53px;
    display: flex;
    flex-direction: column;
    gap: 14px;
}

.sys-menu i {
    height: 7px;
    border-radius: 3px;
    background-color: #8a8a8a;
}

.smudge {
    position: absolute;
    left: 900px;
    top: 58px;
    width: 330px;
    height: 42px;
    background: repeating-linear-gradient(90deg, #f4f4f4 0 6px, #fff 6px 16px);
    filter: blur(3px);
}

.smudge-bar {
    position: absolute;
    left: 988px;
    top: 58px;
    width: 8px;
    height: 38px;
    border-radius: 0 0 4px 4px;
    background: linear-gradient(90deg, #555, #111 50%, #666);
}

.smudge-tick {
    position: absolute;
    left: 1224px;
    top: 68px;
    width: 7px;
    height: 11px;
    border-top: 3px solid #222;
    border-bottom: 3px solid #222;
    border-right: 2px solid #222;
}
```
